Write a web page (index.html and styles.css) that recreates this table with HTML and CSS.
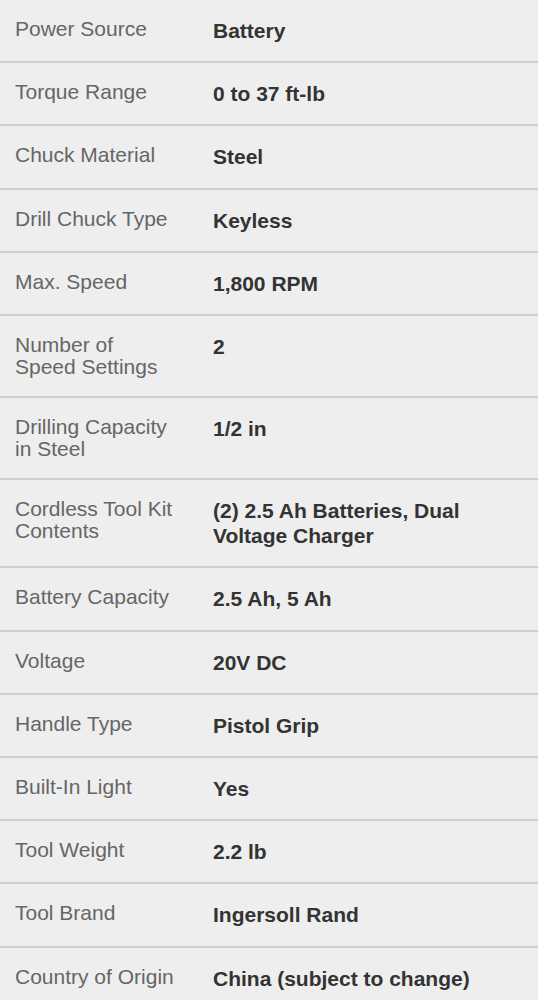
FILE: index.html
```html
<!DOCTYPE html>
<html lang="en">
<head>
<meta charset="utf-8">
<title>Specifications</title>
<link rel="stylesheet" href="styles.css">
</head>
<body>
<div class="specs">
  <div class="row"><div class="label">Power Source</div><div class="value">Battery</div></div>
  <div class="row"><div class="label">Torque Range</div><div class="value">0 to 37 ft-lb</div></div>
  <div class="row"><div class="label">Chuck Material</div><div class="value">Steel</div></div>
  <div class="row"><div class="label">Drill Chuck Type</div><div class="value">Keyless</div></div>
  <div class="row"><div class="label">Max. Speed</div><div class="value">1,800 RPM</div></div>
  <div class="row"><div class="label">Number of Speed Settings</div><div class="value">2</div></div>
  <div class="row"><div class="label">Drilling Capacity in Steel</div><div class="value">1/2 in</div></div>
  <div class="row"><div class="label">Cordless Tool Kit Contents</div><div class="value">(2) 2.5 Ah Batteries, Dual Voltage Charger</div></div>
  <div class="row"><div class="label">Battery Capacity</div><div class="value">2.5 Ah, 5 Ah</div></div>
  <div class="row"><div class="label">Voltage</div><div class="value">20V DC</div></div>
  <div class="row"><div class="label">Handle Type</div><div class="value">Pistol Grip</div></div>
  <div class="row"><div class="label">Built-In Light</div><div class="value">Yes</div></div>
  <div class="row"><div class="label">Tool Weight</div><div class="value">2.2 lb</div></div>
  <div class="row"><div class="label">Tool Brand</div><div class="value">Ingersoll Rand</div></div>
  <div class="row"><div class="label">Country of Origin</div><div class="value">China (subject to change)</div></div>
</div>
</body>
</html>
```
FILE: styles.css
```css
html, body {
  margin: 0;
  padding: 0;
  background: #eeeeee;
}
body {
  font-family: "Liberation Sans", Arial, sans-serif;
}
.specs {
  display: flex;
  flex-direction: column;
}
.row {
  display: grid;
  grid-template-columns: 198px 1fr;
  align-items: start;
  padding: 18px 12px 18px 15px;
  border-bottom: 2px solid #cfcfcf;
}
.label {
  max-width: 162px;
  font-size: 21px;
  line-height: 22px;
  color: #666666;
}
.value {
  font-size: 21px;
  line-height: 25.2px;
  font-weight: bold;
  color: #333333;
}
```
